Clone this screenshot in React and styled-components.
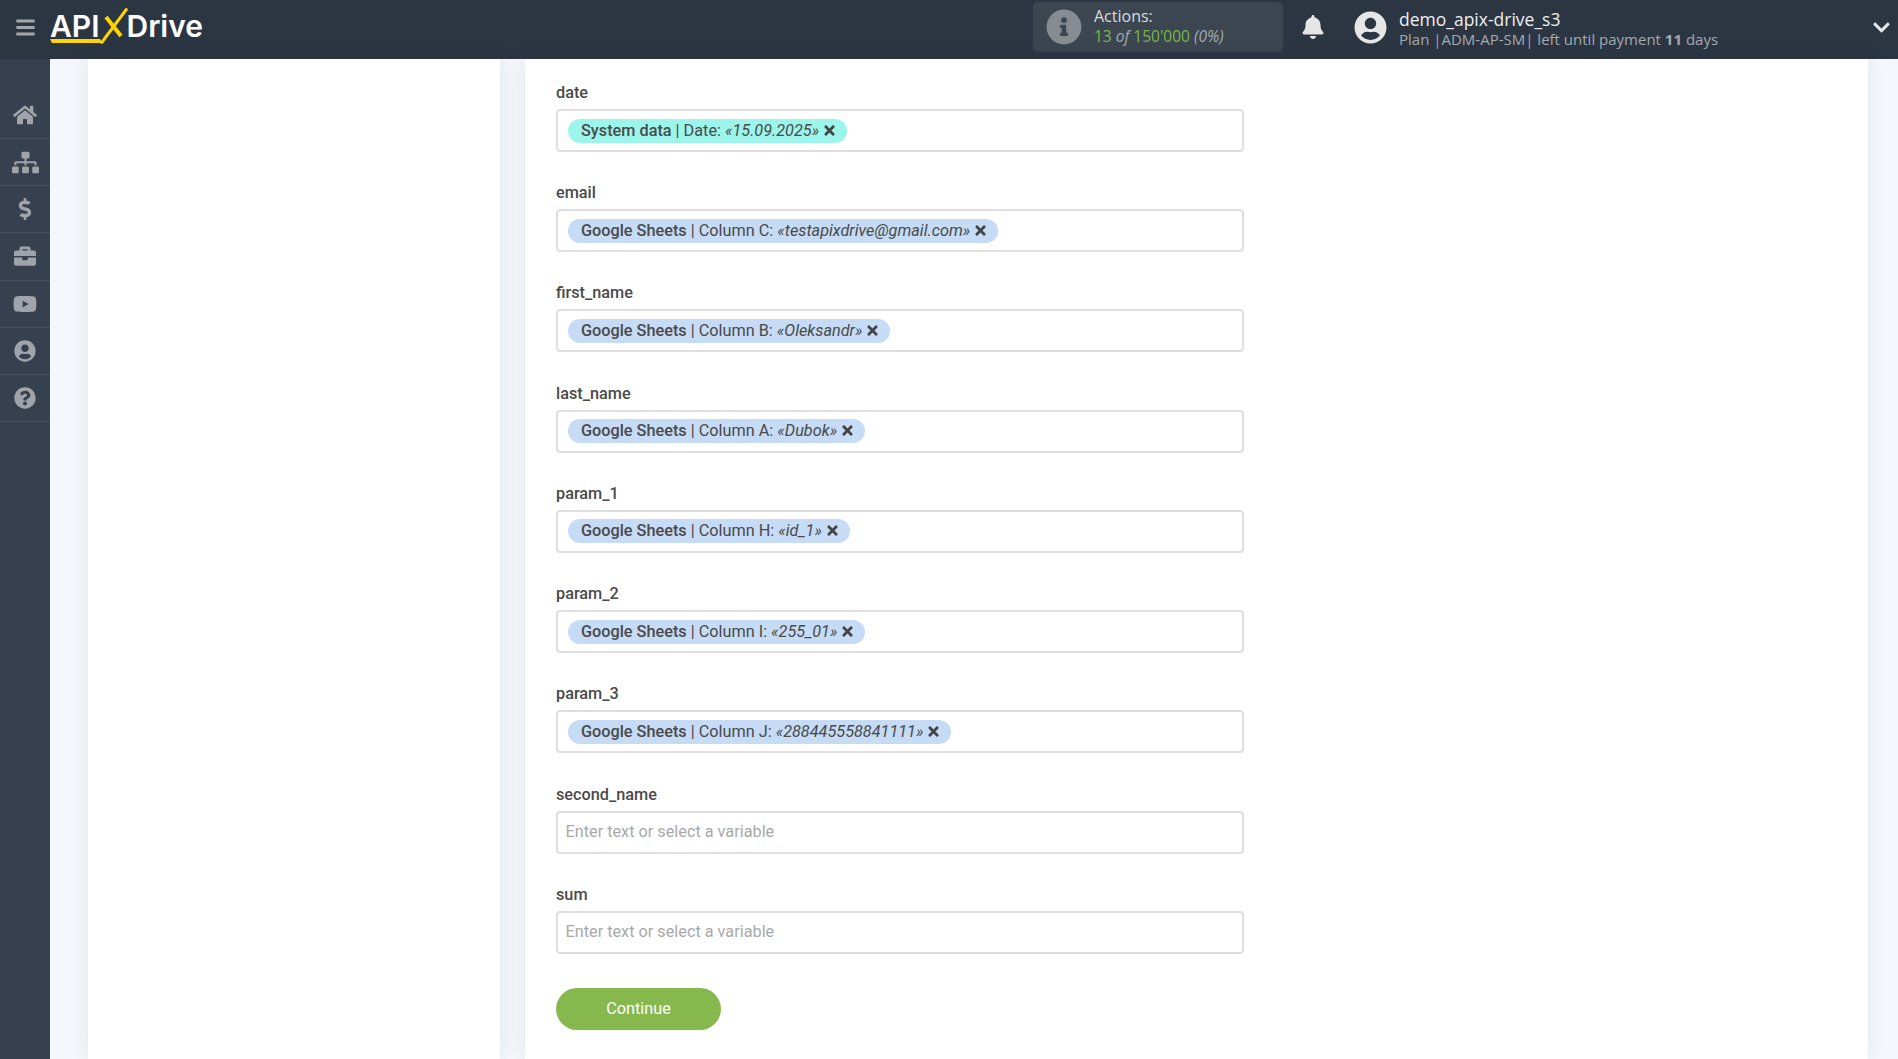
import React from 'react';
import styled, { createGlobalStyle } from 'styled-components';
import {
  FaBars, FaBell, FaBriefcase, FaChevronDown, FaDollarSign, FaHome, FaInfoCircle,
  FaQuestionCircle, FaSitemap, FaTimes, FaUserCircle, FaYoutube,
} from 'react-icons/fa';

const GlobalStyle = createGlobalStyle`
  html, body {
    margin: 0;
    padding: 0;
    height: 100%;
    overflow: hidden;
    background: #f4f7fb;
    font-family: Roboto, "Liberation Sans", sans-serif;
  }
  * { box-sizing: border-box; }
`;

const Page = styled.div`
  height: 100vh;
  display: flex;
  flex-direction: column;
  overflow: hidden;
`;

const Header = styled.header`
  height: 59px;
  flex: none;
  display: flex;
  align-items: center;
  padding-bottom: 5px;
  background: #2c3643;
  font-family: "Open Sans", sans-serif;
`;

const MenuButton = styled.div`
  width: 50px;
  display: flex;
  justify-content: center;
  color: #a3a7ad;
  font-size: 21px;
  line-height: 0;
`;

const Logo = styled.div`
  display: flex;
  align-items: center;
  position: relative;
  height: 54px;
  padding-bottom: 2px;
  font-family: Inter, sans-serif;
  font-size: 30px;
  font-weight: 600;
  color: #fff;
`;

const LogoX = styled.svg`
  width: 28px;
  height: 36px;
  margin: 0 -2px 0 1px;
`;

const LogoLine = styled.svg`
  position: absolute;
  left: 0;
  top: 39px;
  width: 52px;
  height: 5px;
`;

const ActionsBox = styled.div`
  margin-left: auto;
  width: 250px;
  height: 50px;
  display: flex;
  align-items: center;
  gap: 12px;
  padding-left: 13px;
  border-radius: 5px;
  background: #3b4650;
`;

const ActionsIcon = styled.div`
  color: #868c92;
  font-size: 36px;
  line-height: 0;
`;

const ActionsText = styled.div`
  margin-top: -2px;
  color: #d8dbde;
  font-size: 16px;
  line-height: 20px;
`;

const ActionsCount = styled.div`
  font-size: 15.5px;
  color: #7ab648;
  white-space: nowrap;
`;

const Muted = styled.i`
  color: #a5abb1;
`;

const BellIcon = styled.div`
  margin-left: 18px;
  color: #e6e6e6;
  font-size: 24px;
  line-height: 0;
`;

const Avatar = styled.div`
  margin-left: 29px;
  color: #e6e6e6;
  font-size: 33px;
  line-height: 0;
`;

const UserInfo = styled.div`
  margin-left: 12px;
  margin-top: 4px;
  width: 473px;
`;

const UserName = styled.div`
  font-size: 17.5px;
  line-height: 20px;
  color: #eceef0;
`;

const UserPlan = styled.div`
  font-size: 15px;
  line-height: 20px;
  color: #a4a9af;
  white-space: nowrap;
`;

const Chevron = styled.div`
  margin-right: 7px;
  color: #e6e6e6;
  font-size: 19px;
  line-height: 0;
`;

const Body = styled.div`
  flex: 1;
  display: flex;
  min-height: 0;
`;

const Sidebar = styled.nav`
  width: 50px;
  flex: none;
  padding-top: 33px;
  background: #36404e;
`;

const SideItem = styled.div`
  height: 47.15px;
  display: flex;
  align-items: center;
  justify-content: center;
  border-bottom: 1px solid #475160;
  color: #a0a4aa;
`;

const Main = styled.main`
  flex: 1;
  display: flex;
  gap: 25px;
  padding: 0 30px 0 38px;
  min-width: 0;
`;

const Panel = styled.section`
  background: #fff;
  box-shadow: 0 0 20px rgba(30, 45, 70, 0.09);
`;

const SidePanel = styled(Panel)`
  width: 412px;
  flex: none;
`;

const FormPanel = styled(Panel)`
  flex: 1;
  padding: 23px 0 0 31px;
`;

const Field = styled.div`
  width: 688px;
  margin-bottom: 30.22px;
`;

const Label = styled.div`
  height: 20px;
  margin-bottom: 7px;
  font-size: 16.25px;
  font-weight: 500;
  line-height: 21px;
  color: #4a4a4a;
`;

const Control = styled.div`
  height: 43px;
  display: flex;
  align-items: center;
  padding: 0 10px;
  border: 2px solid #dfdfdf;
  border-radius: 4px;
  background: #fff;
`;

const Chip = styled.div`
  height: 24px;
  display: flex;
  align-items: center;
  padding: 0 10px 1px 13px;
  border-radius: 12px;
  background: ${props => props.$system ? '#9cf5eb' : '#c6dbf5'};
  color: #4a4a4a;
  font-size: 16.25px;
  white-space: pre;
`;

const ChipSource = styled.b`
  font-weight: 500;
`;

const ChipRemove = styled.span`
  display: flex;
  margin-left: 3px;
  font-size: 15px;
  color: #444;
`;

const TextInput = styled.input`
  width: 100%;
  height: 43px;
  padding: 0 7.5px 1px;
  border: 2px solid #dfdfdf;
  border-radius: 4px;
  outline: none;
  font-family: Roboto, sans-serif;
  font-size: 16.25px;
  color: #4a4a4a;

  &::placeholder {
    color: #a9a9a9;
    opacity: 1;
  }
`;

const ContinueButton = styled.button`
  width: 165px;
  height: 42px;
  margin-top: 4px;
  border: none;
  border-radius: 21px;
  background: #86b84e;
  color: #fff;
  font-family: Roboto, sans-serif;
  font-size: 16.25px;
  cursor: pointer;
`;

const menuItems = [
  { Icon: FaHome, size: 24 },
  { Icon: FaSitemap, size: 27 },
  { Icon: FaDollarSign, size: 22 },
  { Icon: FaBriefcase, size: 22 },
  { Icon: FaYoutube, size: 24 },
  { Icon: FaUserCircle, size: 22 },
  { Icon: FaQuestionCircle, size: 22 },
];

const fields = [
  { name: 'date', source: 'System data', column: 'Date', value: '15.09.2025', system: true },
  { name: 'email', source: 'Google Sheets', column: 'Column C', value: 'testapixdrive@gmail.com' },
  { name: 'first_name', source: 'Google Sheets', column: 'Column B', value: 'Oleksandr' },
  { name: 'last_name', source: 'Google Sheets', column: 'Column A', value: 'Dubok' },
  { name: 'param_1', source: 'Google Sheets', column: 'Column H', value: 'id_1' },
  { name: 'param_2', source: 'Google Sheets', column: 'Column I', value: '255_01' },
  { name: 'param_3', source: 'Google Sheets', column: 'Column J', value: '288445558841111' },
  { name: 'second_name' },
  { name: 'sum' },
];

const App = () => (
  <Page>
    <GlobalStyle />
    <Header>
      <MenuButton><FaBars /></MenuButton>
      <Logo>
        API
        <LogoX viewBox="0 0 28 36">
          <path d="M1 35.5 L27 0.5" stroke="#ffd500" strokeWidth="3" fill="none" />
          <path d="M6 9 L21 28" stroke="#ffd500" strokeWidth="4" fill="none" />
        </LogoX>
        Drive
        <LogoLine viewBox="0 0 52 5">
          <path d="M0 0 H50 L52 4 H2 Z" fill="#ffd500" />
        </LogoLine>
      </Logo>
      <ActionsBox>
        <ActionsIcon><FaInfoCircle /></ActionsIcon>
        <ActionsText>
          Actions:
          <ActionsCount>13 <Muted>of</Muted> 150'000 <Muted>(0%)</Muted></ActionsCount>
        </ActionsText>
      </ActionsBox>
      <BellIcon><FaBell /></BellIcon>
      <Avatar><FaUserCircle /></Avatar>
      <UserInfo>
        <UserName>demo_apix-drive_s3</UserName>
        <UserPlan>Plan |ADM-AP-SM| left until payment <b>11</b> days</UserPlan>
      </UserInfo>
      <Chevron><FaChevronDown /></Chevron>
    </Header>
    <Body>
      <Sidebar>
        {menuItems.map(({ Icon, size }, i) => (
          <SideItem key={i}><Icon size={size} /></SideItem>
        ))}
      </Sidebar>
      <Main>
        <SidePanel />
        <FormPanel>
          {fields.map(field => (
            <Field key={field.name}>
              <Label>{field.name}</Label>
              {field.source ? (
                <Control>
                  <Chip $system={field.system}>
                    <ChipSource>{field.source}</ChipSource> | {field.column}: <i>«{field.value}»</i>
                    <ChipRemove><FaTimes /></ChipRemove>
                  </Chip>
                </Control>
              ) : (
                <TextInput placeholder="Enter text or select a variable" />
              )}
            </Field>
          ))}
          <ContinueButton>Continue</ContinueButton>
        </FormPanel>
      </Main>
    </Body>
  </Page>
);

export default App;
